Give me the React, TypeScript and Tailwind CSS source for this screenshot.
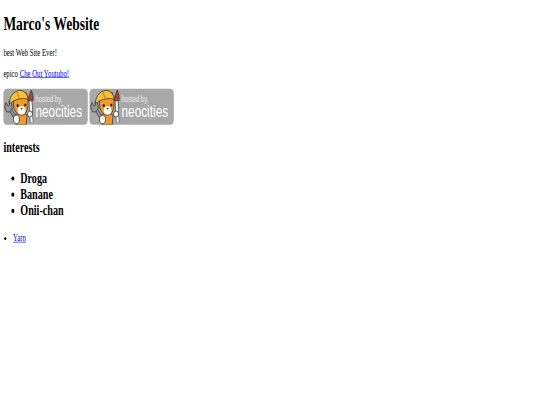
const serif = 'font-["Liberation_Serif",serif]'

function Badge() {
  return (
    <span className="relative inline-block h-[60px] w-[200px] overflow-hidden rounded-[8px] bg-[#a9a9a9] align-baseline">
      <svg viewBox="0 0 200 60" className="absolute left-0 top-0 h-[60px] w-[200px]">
        {/* brush */}
        <path d="M64 16 L67 56" stroke="#333" strokeWidth="8" fill="none" />
        <path d="M64 16 L67 56" stroke="#f2f2f2" strokeWidth="5.5" fill="none" />
        <path d="M59 20 C59 12 64 7 66 2 C70 8 71 14 70 20 Z" fill="#a8433f" stroke="#333" strokeWidth="1.5" />
        {/* wrench */}
        <path d="M14 32 L28 48" stroke="#333" strokeWidth="7" fill="none" />
        <path d="M14 32 L28 48" stroke="#999" strokeWidth="4.5" fill="none" />
        <path d="M3 30 L6 23 L11 29 L15 27 L13 21 L20 24 L21 33 L14 39 L7 38 Z" fill="#999" stroke="#333" strokeWidth="1.5" />
        {/* body and paws */}
        <path d="M28 44 C32 40 50 40 56 44 L54 60 L30 60 Z" fill="#ee9a2f" stroke="#333" strokeWidth="1.5" />
        <ellipse cx="63" cy="42" rx="6" ry="5" fill="#fff" stroke="#333" strokeWidth="1.5" />
        <ellipse cx="31" cy="51" rx="7" ry="7" fill="#fff" stroke="#333" strokeWidth="1.5" />
        {/* head */}
        <path d="M24 22 C23 36 32 44 43 44 C54 44 60 34 58 18 L54 6 L28 10 Z" fill="#f19a2e" stroke="#333" strokeWidth="1.5" />
        <ellipse cx="43" cy="36" rx="9" ry="7" fill="#fff" />
        <circle cx="34" cy="28" r="2.6" fill="#222" />
        <circle cx="52" cy="27" r="2.6" fill="#222" />
        <path d="M40 32 L46 32 L43 35 Z" fill="#333" />
        {/* hard hat */}
        <path d="M14 25 C14 10 30 1 44 3 C53 5 58 11 59 18 C46 14 28 17 14 25 Z" fill="#f6c136" stroke="#333" strokeWidth="1.5" />
        <path d="M32 5 L37 15" stroke="#c98f1a" strokeWidth="3" />
      </svg>
      <span className="absolute left-[76px] top-[10px] text-[14px] leading-none text-[#eeeeee] font-['Liberation_Sans',sans-serif]">
        hosted by,
      </span>
      <span className="absolute left-[76px] top-[24px] text-[28px] leading-none text-white font-['Liberation_Sans',sans-serif]">
        neocities
      </span>
    </span>
  )
}

export default function App() {
  return (
    <div className="h-[405px] w-[540px] overflow-hidden bg-white">
      {/* page was captured at 1280x675 and squeezed into the window */}
      <div className={`h-[675px] w-[1280px] origin-top-left scale-x-[0.421875] scale-y-[0.6] px-2 text-[16px] leading-[normal] text-black ${serif}`}>
        <h1 className="mb-[21.44px] pt-[21.44px] text-[32px] font-bold leading-[normal]">Marco's Website</h1>
        <p className="my-4">best Web Site Ever!</p>
        <p className="my-4">
          epico <a href="#" className="text-[#0000ee] underline">Che Out Youtubo!</a>
        </p>
        <p className="my-4">
          <Badge /> <Badge />
        </p>
        <h2 className="mb-[25px] mt-[19.92px] text-[24px] font-bold leading-[normal]">interests</h2>
        <ul className="mb-[23px] mt-[25px] list-disc pl-10 text-[24px] font-bold">
          <li>Droga</li>
          <li>Banane</li>
          <li>Onii-chan</li>
        </ul>
        <ul className="my-4 list-disc pl-[18px]">
          <li className="pl-[5px]">
            <a href="#" className="text-[#0000ee] underline">Yarn</a>
          </li>
        </ul>
      </div>
    </div>
  )
}
